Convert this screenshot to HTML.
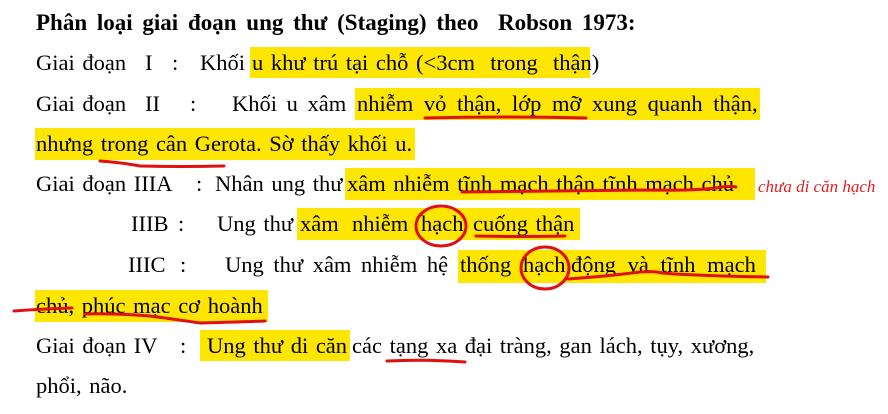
<!DOCTYPE html>
<html><head><meta charset="utf-8"><style>
body{margin:0;width:888px;height:414px;background:#fff;position:relative;overflow:hidden;font-family:"Liberation Serif",serif;color:#000}
.h{position:absolute;background:#ffe600}
.l{position:absolute;left:0;width:888px;height:30px}
.l span{position:absolute;top:0;font-size:22.5px;white-space:pre;line-height:26px;word-spacing:2px}
svg{position:absolute;left:0;top:0}
</style></head><body>
<div class="h" style="left:250px;top:47px;width:340px;height:31px"></div>
<div class="h" style="left:355px;top:88px;width:405px;height:32px"></div>
<div class="h" style="left:35px;top:128px;width:380px;height:32px"></div>
<div class="h" style="left:345px;top:168px;width:410px;height:32px"></div>
<div class="h" style="left:297px;top:208px;width:283px;height:32px"></div>
<div class="h" style="left:458px;top:250px;width:308px;height:33px"></div>
<div class="h" style="left:35px;top:290px;width:233px;height:32px"></div>
<div class="h" style="left:200px;top:330px;width:150px;height:31px"></div>

<div class="l" style="top:10px"><span style="left:36px;font-weight:bold;font-size:23px;word-spacing:4px">Phân loại giai đoạn ung thư (Staging) theo  Robson 1973:</span></div>
<div class="l" style="top:50px"><span style="left:36px">Giai đoạn</span><span style="left:145px">I</span><span style="left:172px">:</span><span style="left:200px">Khối</span><span style="left:252px">u khư trú tại chỗ (&lt;3cm  trong  thận)</span></div>
<div class="l" style="top:91px"><span style="left:36px">Giai đoạn</span><span style="left:145px">II</span><span style="left:190px">:</span><span style="left:232px;word-spacing:4px">Khối u xâm</span><span style="left:357px;word-spacing:5px">nhiễm vỏ thận, lớp mỡ xung quanh thận,</span></div>
<div class="l" style="top:131px"><span style="left:36px">nhưng trong cân Gerota. Sờ thấy khối u.</span></div>
<div class="l" style="top:171px"><span style="left:36px">Giai đoạn IIIA</span><span style="left:196px">:</span><span style="left:215px">Nhân ung thư</span><span style="left:347px">xâm nhiễm tĩnh mạch thận tĩnh mạch chủ</span><span style="left:758px;top:3px;font-size:17px;font-style:italic;color:#e02020;word-spacing:0">chưa di căn hạch</span></div>
<div class="l" style="top:211px"><span style="left:131px">IIIB</span><span style="left:178px">:</span><span style="left:217px">Ung thư</span><span style="left:300px;word-spacing:1px">xâm  nhiễm</span><span style="left:421px">hạch</span><span style="left:473px">cuống thận</span></div>
<div class="l" style="top:252px"><span style="left:128px">IIIC</span><span style="left:180px">:</span><span style="left:225px;word-spacing:4px">Ung thư xâm nhiễm hệ</span><span style="left:460px">thống</span><span style="left:523px">hạch</span><span style="left:571px;word-spacing:6px">động và tĩnh mạch</span></div>
<div class="l" style="top:293px"><span style="left:36px">chủ, phúc mạc cơ hoành</span></div>
<div class="l" style="top:333px"><span style="left:36px">Giai đoạn IV</span><span style="left:180px">:</span><span style="left:207px">Ung thư di căn</span><span style="left:352px">các tạng xa đại tràng, gan lách, tụy, xương,</span></div>
<div class="l" style="top:373px"><span style="left:36px">phổi, não.</span></div>

<svg width="888" height="414" fill="none" stroke="#e01010" stroke-width="3" stroke-linecap="round">
<path d="M425 118 Q505 116 586 118"/>
<path d="M100 161 Q125 163 140 166 Q180 167 224 166"/>
<path d="M462 192 Q560 191 650 190 Q700 191 722 187 Q732 186 736 187"/>
<ellipse cx="441" cy="226" rx="25" ry="20"/>
<path d="M476 236 Q520 237 565 236"/>
<ellipse cx="545" cy="268" rx="24" ry="21"/>
<path d="M568 279 Q610 276 640 272 Q655 271 662 273 Q700 276 768 277"/>
<path d="M14 311 Q40 309 72 308"/>
<path d="M85 314 Q110 313 150 316 Q180 320 200 323 Q240 322 265 321"/>
<path d="M387 361 Q425 359 465 362"/>
</svg>
</body></html>
